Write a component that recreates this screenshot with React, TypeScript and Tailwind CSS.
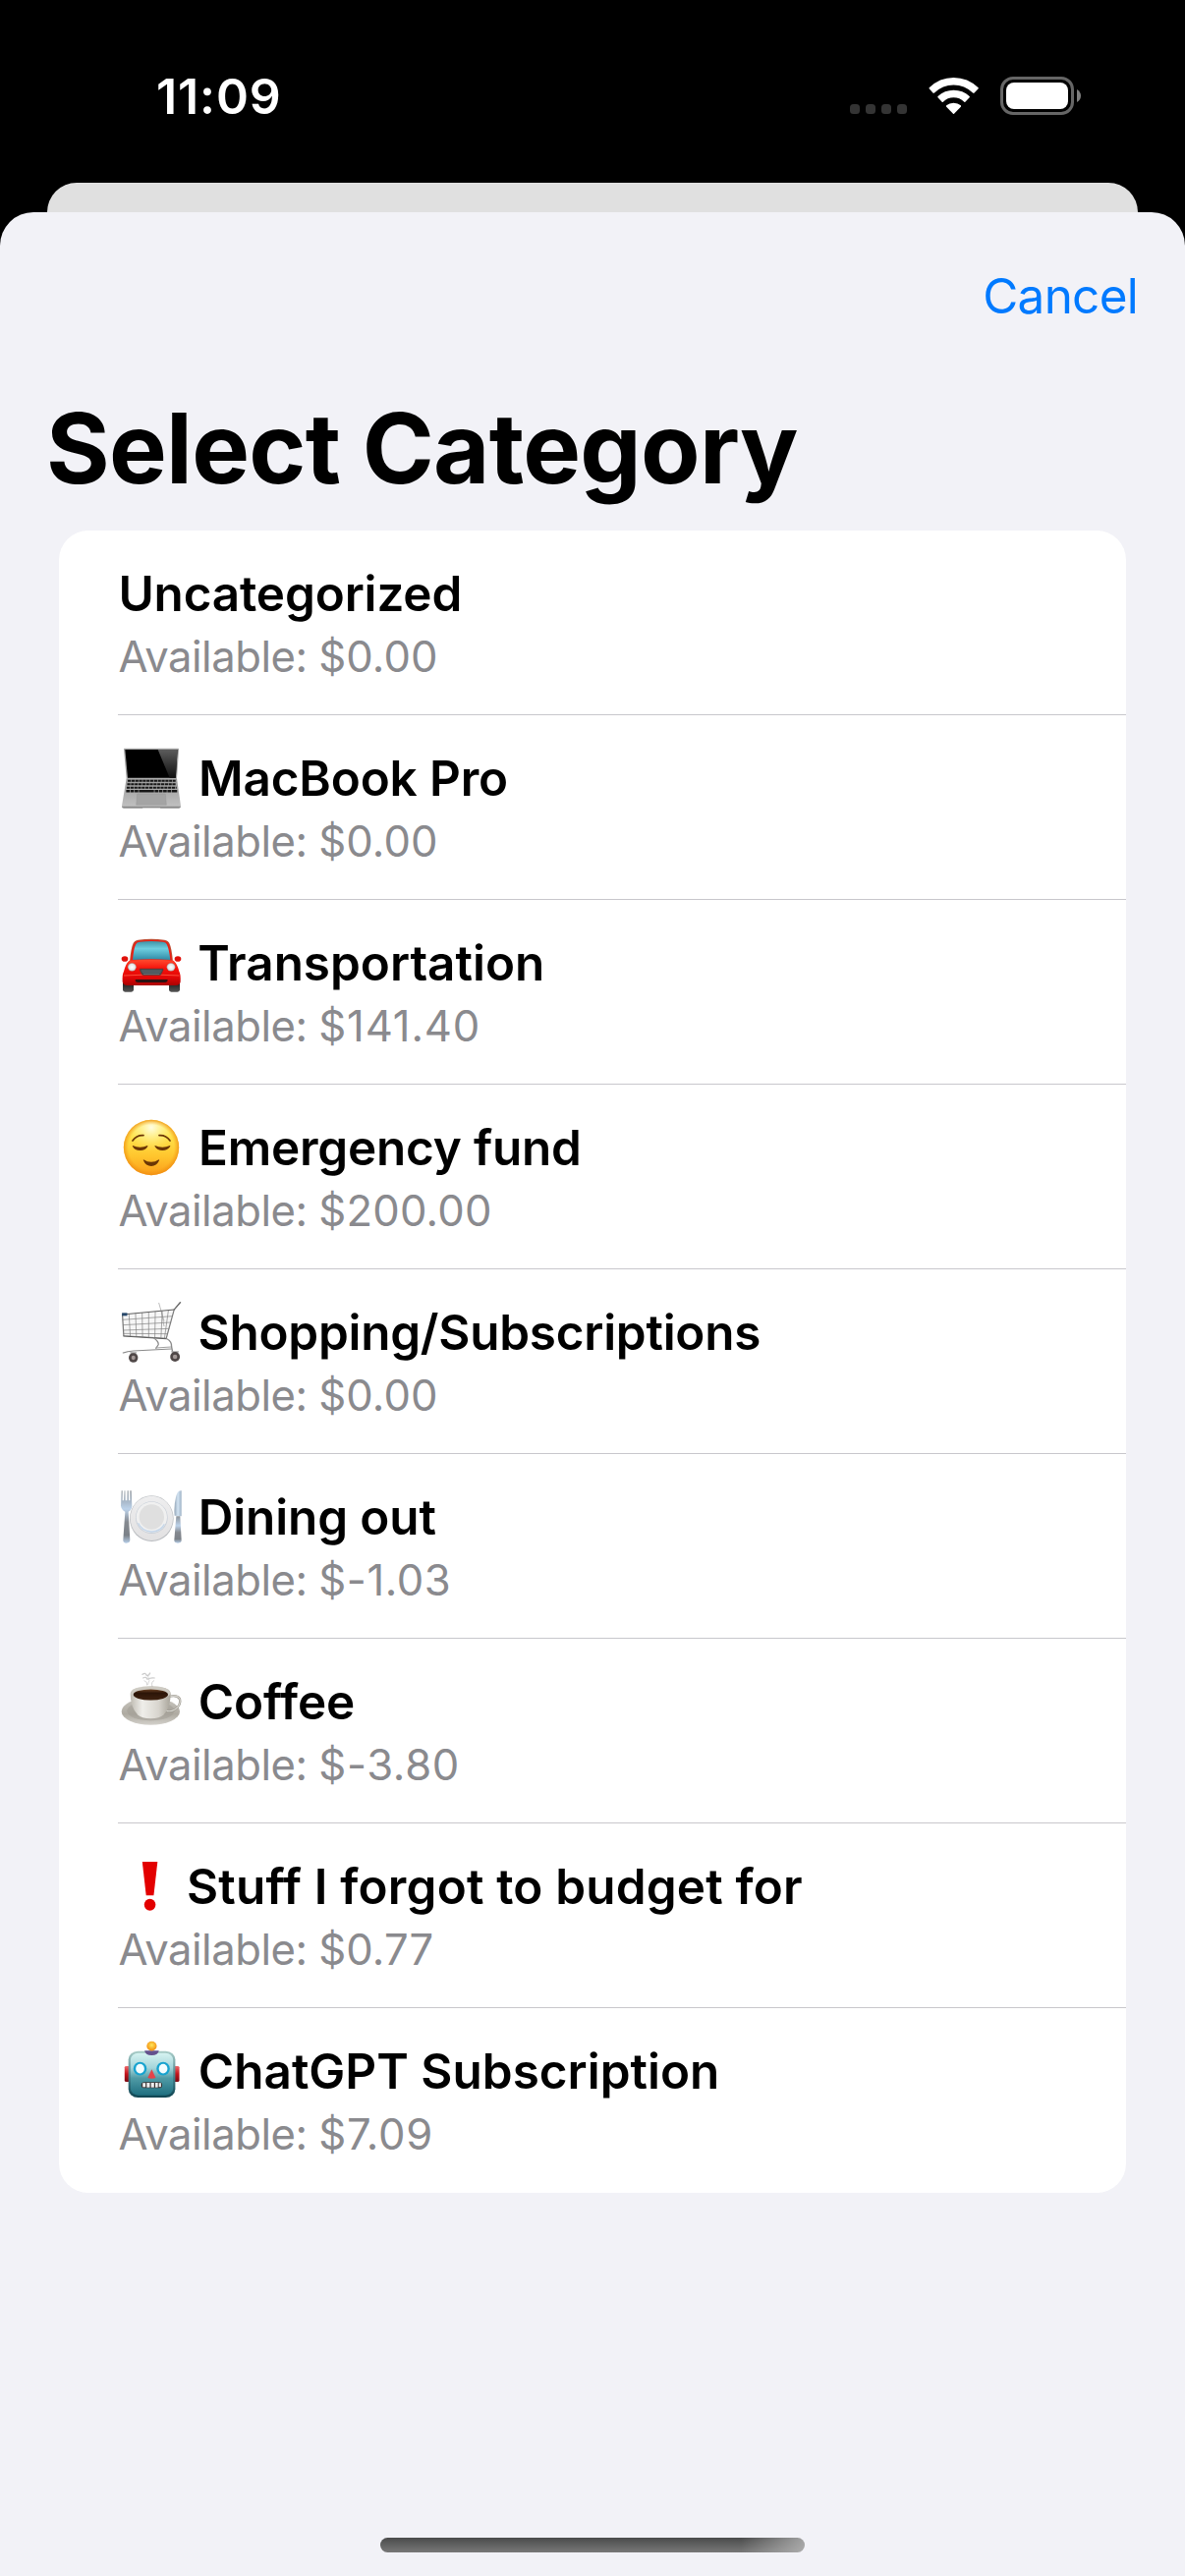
import type { ReactNode } from "react";

function IconBox({ viewBox, children }: { viewBox: string; children: ReactNode }) {
  return (
    <svg className="h-[68px] w-[68px] shrink-0" viewBox={viewBox} preserveAspectRatio="none">
      {children}
    </svg>
  );
}

function Laptop() {
  const keys = [161, 171.5, 182, 192.5];
  return (
    <IconBox viewBox="60 54 204 204">
      <defs>
        <linearGradient id="lapBase" x1="0" y1="0" x2="0" y2="1">
          <stop offset="0" stopColor="#9a9a9a" />
          <stop offset="1" stopColor="#c2c2c2" />
        </linearGradient>
        <linearGradient id="lapGlare" x1="0" y1="0" x2="0" y2="1">
          <stop offset="0" stopColor="#5c5c5c" />
          <stop offset="1" stopColor="#101010" />
        </linearGradient>
      </defs>
      <path d="M80 65 H244 Q246 65 246 68 L240 157 H86 L78 68 Q78 65 80 65 Z" fill="#a3a3a3" />
      <path d="M82 69 H242 L236.500 155 H90 Z" fill="#000" />
      <path d="M182 69 H242 L236.500 155 H218 Z" fill="url(#lapGlare)" />
      <path d="M86 157 H240 L252 241 Q252 245 248 245 H190 L187 248 H138 L135 245 H76 Q72 245 72 241 Z" fill="url(#lapBase)" />
      <path d="M73 242 H251 L252 243 Q251 248 246 248 H190 L187 246 H138 L135 248 H78 Q72 248 72 243 Z" fill="#8a8a8a" />
      {keys.map((y, i) => (
        <path
          key={y}
          d={`M${90 - i * 1.6} ${y + 3.2} H${236 + i * 1.6}`}
          stroke="#161616"
          strokeWidth={i === 3 ? 8 : 6.5}
          strokeDasharray={i === 3 ? "11 2 11 2 11 2 46 2 11 2" : "9.500 2"}
        />
      ))}
      <path d="M119 204 H205 L208 238 H116 Z" fill="#a4a4a4" />
      <path d="M119 204 H205 L208 238 H116 Z" fill="none" stroke="#8f8f8f" strokeWidth="1" />
    </IconBox>
  );
}

function Car() {
  return (
    <IconBox viewBox="60 48 204 204">
      <defs>
        <linearGradient id="carBody" x1="0" y1="0" x2="0" y2="1">
          <stop offset="0" stopColor="#ff4a2e" />
          <stop offset="0.35" stopColor="#f5120b" />
          <stop offset="0.7" stopColor="#e00606" />
          <stop offset="1" stopColor="#a80202" />
        </linearGradient>
        <linearGradient id="carGlass" x1="0" y1="0" x2="0" y2="1">
          <stop offset="0" stopColor="#3f93a6" />
          <stop offset="0.4" stopColor="#6fcfe0" />
          <stop offset="1" stopColor="#2f8aa6" />
        </linearGradient>
        <radialGradient id="carLamp">
          <stop offset="0" stopColor="#ffffff" />
          <stop offset="0.7" stopColor="#e6e6e6" />
          <stop offset="1" stopColor="#a9a9a9" />
        </radialGradient>
        <linearGradient id="tyre" x1="0" y1="0" x2="0" y2="1">
          <stop offset="0" stopColor="#111" />
          <stop offset="1" stopColor="#555" />
        </linearGradient>
      </defs>
      <rect x="75" y="205" width="33" height="34" rx="7" fill="url(#tyre)" />
      <rect x="216" y="205" width="33" height="34" rx="7" fill="url(#tyre)" />
      <path d="M96 146 Q100 104 107 90 Q110 82 122 80 Q162 75 202 80 Q214 82 217 90 Q224 104 228 146 Z" fill="#c0492f" />
      <path d="M99 148 Q103 106 110 92 Q113 85 124 83 Q162 79 200 83 Q211 85 214 92 Q221 106 225 148 Z" fill="#ee1c12" />
      <path d="M105 141 Q108 106 115 93 Q117 87 126 86 Q162 82 198 86 Q207 87 209 93 Q216 106 220 141 Q162 137 105 141 Z" fill="url(#carGlass)" />
      <ellipse cx="81" cy="138" rx="10" ry="8.500" fill="#e0100a" />
      <ellipse cx="243" cy="138" rx="10" ry="8.500" fill="#e0100a" />
      <path d="M94 143 Q162 138 230 143 Q242 154 247 176 Q252 184 251 208 Q250 219 236 219 H89 Q75 219 74 208 Q73 184 78 176 Q83 154 94 143 Z" fill="url(#carBody)" />
      <path d="M78 189 Q162 182 247 189" fill="none" stroke="#ff5a45" strokeWidth="2.500" />
      <ellipse cx="103" cy="163" rx="13" ry="12.500" fill="url(#carLamp)" />
      <ellipse cx="222" cy="163" rx="13" ry="12.500" fill="url(#carLamp)" />
      <path d="M128 168 H197 Q200 168 198 173 L192 185 Q190 188 186 188 H139 Q135 188 133 185 L127 173 Q125 168 128 168 Z" fill="#40474b" stroke="#8b2a22" strokeWidth="1.500" />
      <path d="M131 174 H194 M134 179.500 H191 M138 184.500 H187" stroke="#75828a" strokeWidth="2" />
      <path d="M116 201 H209 Q213 201 212 205 Q210 210 204 210 H121 Q114 210 113 205 Q112 201 116 201 Z" fill="#2c1212" />
    </IconBox>
  );
}

function RelievedFace() {
  return (
    <IconBox viewBox="60 42 204 204">
      <defs>
        <linearGradient id="faceFill" x1="0" y1="0" x2="0" y2="1">
          <stop offset="0" stopColor="#fff27a" />
          <stop offset="0.3" stopColor="#ffe14a" />
          <stop offset="0.65" stopColor="#ffc62e" />
          <stop offset="1" stopColor="#fb9d1a" />
        </linearGradient>
        <radialGradient id="faceEdge">
          <stop offset="0.82" stopColor="#f59a13" stopOpacity="0" />
          <stop offset="1" stopColor="#ee8b10" stopOpacity="0.75" />
        </radialGradient>
        <radialGradient id="faceShine" cx="0.5" cy="0.12" r="0.45">
          <stop offset="0" stopColor="#fffff0" stopOpacity="0.9" />
          <stop offset="1" stopColor="#fff27a" stopOpacity="0" />
        </radialGradient>
      </defs>
      <circle cx="162" cy="144" r="84.500" fill="url(#faceFill)" />
      <circle cx="162" cy="144" r="80" fill="url(#faceShine)" />
      <circle cx="162" cy="144" r="84.500" fill="url(#faceEdge)" />
      <g fill="none" stroke="#6b3605" strokeLinecap="round">
        <path d="M105 123 Q118 105 138 107" strokeWidth="5" />
        <path d="M219 123 Q206 105 186 107" strokeWidth="5" />
      </g>
      <g fill="#6b3605">
        <path d="M105 138 Q128 149 150 138 Q152 139 151 141 Q144 153 128 153 Q111 153 105 141 Q104 138 105 138 Z" />
        <path d="M173 138 Q196 149 219 138 Q221 139 219 142 Q212 153 196 153 Q180 153 173 141 Q172 139 173 138 Z" />
        <path d="M138 181 Q162 196 185 181 Q187 182 186 184 Q178 201 162 201 Q145 201 138 184 Q137 181 138 181 Z" />
      </g>
    </IconBox>
  );
}

function Cart() {
  return (
    <IconBox viewBox="44.8 66 152.3 204">
      <path d="M55 116 L173 100 L156 187 L58 179 Z" fill="#eeeeee" opacity="0.55" />
      <g fill="none" stroke="#7d7d7d" strokeWidth="1.700">
        <path d="M55 130 L170 119 M56 146 L166 138 M57 162 L162 157 M57 172 L159 173" />
        <path d="M70 112 L73 180 M85 110 L87 181 M100 108 L101 182 M115 107 L115 183 M130 105 L129 184 M146 103 L143 185 M160 101 L151 186" />
      </g>
      <path d="M138 78 L150 134 M144 104 L150 150" fill="none" stroke="#8d8d8d" strokeWidth="1.500" />
      <path d="M55 114 L173 99" stroke="#5f5f5f" strokeWidth="3.500" />
      <path d="M55 114 L58 179 L155 187 L173 99" fill="none" stroke="#7c7c7c" strokeWidth="2.800" />
      <path d="M57 180 L156 188" stroke="#5c5c5c" strokeWidth="3" />
      <path d="M187 77 L173 99" stroke="#6a6a6a" strokeWidth="3.500" strokeLinecap="round" />
      <rect x="54" y="109" width="12" height="9" fill="#28486b" />
      <path d="M126 185 Q138 196 137 206 L131 218" fill="none" stroke="#8a8a8a" strokeWidth="3" />
      <path d="M156 188 Q168 196 167 212 L170 232" fill="none" stroke="#8a8a8a" strokeWidth="3" />
      <path d="M57 231 Q66 226 80 225 L166 219" fill="none" stroke="#8b8b8b" strokeWidth="3.500" strokeLinecap="round" />
      <path d="M131 216 L166 213" stroke="#a0a0a0" strokeWidth="2.500" />
      <path d="M72 229 H88 L84 240 H76 Z M166 226 H184 L180 238 H170 Z" fill="#a5a5a5" />
      <ellipse cx="80" cy="246" rx="10.500" ry="14.500" fill="#4f4747" />
      <ellipse cx="80" cy="246" rx="4.500" ry="6.500" fill="#a39997" />
      <ellipse cx="175" cy="243" rx="11" ry="15" fill="#4f4747" />
      <ellipse cx="175" cy="243" rx="5" ry="7" fill="#a39997" />
    </IconBox>
  );
}

function Plate() {
  return (
    <IconBox viewBox="60 60 204 204">
      <defs>
        <linearGradient id="steel" x1="0" y1="0" x2="0" y2="1">
          <stop offset="0" stopColor="#8d949b" />
          <stop offset="0.35" stopColor="#bcd2ea" />
          <stop offset="0.6" stopColor="#85898f" />
          <stop offset="0.85" stopColor="#7b8188" />
          <stop offset="1" stopColor="#b7cee8" />
        </linearGradient>
        <linearGradient id="blade" x1="0" y1="0" x2="1" y2="0">
          <stop offset="0" stopColor="#93a5b6" />
          <stop offset="0.5" stopColor="#d3e4f3" />
          <stop offset="1" stopColor="#9eb2c6" />
        </linearGradient>
        <linearGradient id="plateRim" x1="0" y1="0" x2="0" y2="1">
          <stop offset="0" stopColor="#eeeeef" />
          <stop offset="1" stopColor="#e2e1e2" />
        </linearGradient>
      </defs>
      <ellipse cx="163" cy="167" rx="67" ry="70" fill="#b9bcc0" />
      <ellipse cx="163" cy="166" rx="65" ry="68" fill="url(#plateRim)" />
      <circle cx="163" cy="164" r="49" fill="#c8cfd8" />
      <circle cx="163" cy="163" r="47" fill="#f0f0f0" />
      <circle cx="163" cy="162" r="38" fill="#dfdfdf" />
      <path d="M122 181 A45 45 0 0 0 202 184" fill="none" stroke="#c4d6ea" strokeWidth="4" />
      <path d="M71 82 H74 V112 H78 L80 82 H82 L83 112 H88 L89 82 H92 L93 112 H97 V82 H101 L103 128 Q102 140 92 146 L97 232 Q97 242 86 242 Q75 242 76 232 L82 146 Q71 140 69 128 Z" fill="url(#steel)" />
      <path d="M254 82 V160 L233 158 Q230 120 240 92 Q245 81 254 82 Z" fill="url(#blade)" />
      <path d="M238 160 H250 L254 232 Q255 242 243 242 Q231 242 232 232 Z" fill="url(#steel)" />
    </IconBox>
  );
}

function CoffeeCup() {
  return (
    <IconBox viewBox="60 54 204 204">
      <defs>
        <linearGradient id="saucer" x1="0" y1="0" x2="0" y2="1">
          <stop offset="0" stopColor="#c9c6bf" />
          <stop offset="0.6" stopColor="#aeaaa1" />
          <stop offset="1" stopColor="#d3d1cb" />
        </linearGradient>
        <linearGradient id="cup" x1="0" y1="0" x2="1" y2="0">
          <stop offset="0" stopColor="#bfbbb2" />
          <stop offset="0.3" stopColor="#efeeea" />
          <stop offset="0.7" stopColor="#d8d5ce" />
          <stop offset="1" stopColor="#a8a49a" />
        </linearGradient>
        <linearGradient id="brew" x1="0" y1="0" x2="0" y2="1">
          <stop offset="0" stopColor="#6b4326" />
          <stop offset="0.35" stopColor="#2c1508" />
          <stop offset="1" stopColor="#3e2210" />
        </linearGradient>
      </defs>
      <ellipse cx="160" cy="186" rx="89" ry="41" fill="url(#saucer)" />
      <ellipse cx="160" cy="184" rx="72" ry="30" fill="#a09c93" opacity="0.5" />
      <path d="M210 143 Q240 132 249 148 Q254 166 234 180 Q220 188 208 184" fill="none" stroke="#99968d" strokeWidth="7" />
      <path d="M210 143 Q240 132 249 148 Q254 166 234 180 Q220 188 208 184" fill="none" stroke="#d8d6d0" strokeWidth="3.500" />
      <path d="M98 132 Q100 110 160 109 Q220 110 221 132 Q221 172 200 196 Q188 208 160 208 Q132 208 120 196 Q98 172 98 132 Z" fill="url(#cup)" />
      <ellipse cx="160" cy="130" rx="60" ry="21.500" fill="#cecbc3" />
      <ellipse cx="160" cy="135" rx="53" ry="16.500" fill="url(#brew)" />
      <g fill="none" stroke="#a8a8a8" strokeLinecap="round" opacity="0.6">
        <path d="M135 73 Q144 66 147 75 Q152 80 158 69" strokeWidth="4" />
        <path d="M137 84 Q146 78 150 88 Q160 82 172 84" strokeWidth="3.500" />
        <path d="M141 92 Q152 96 149 105 M170 92 Q160 96 165 110" strokeWidth="2.500" />
        <path d="M152 78 Q160 92 152 104" strokeWidth="2" />
      </g>
    </IconBox>
  );
}

function Exclamation() {
  return (
    <IconBox viewBox="41.3 48 140.3 204">
      <path d="M92.500 75 H124.500 L116.500 178 H100.500 Z" fill="#e30000" />
      <ellipse cx="108.500" cy="206" rx="12" ry="18" fill="#e30000" />
    </IconBox>
  );
}

function Robot() {
  return (
    <IconBox viewBox="165 72 140.3 204">
      <defs>
        <linearGradient id="robotHead" x1="0" y1="0" x2="0" y2="1">
          <stop offset="0" stopColor="#d6f3f1" />
          <stop offset="0.35" stopColor="#a5d5da" />
          <stop offset="0.6" stopColor="#4f9aa5" />
          <stop offset="1" stopColor="#1f6f80" />
        </linearGradient>
        <linearGradient id="robotEdge" x1="0" y1="0" x2="0" y2="1">
          <stop offset="0" stopColor="#aacdc8" />
          <stop offset="0.6" stopColor="#3d7984" />
          <stop offset="1" stopColor="#0f4552" />
        </linearGradient>
        <linearGradient id="robotEar" x1="0" y1="0" x2="0" y2="1">
          <stop offset="0" stopColor="#f0686a" />
          <stop offset="0.5" stopColor="#c3141c" />
          <stop offset="1" stopColor="#7d0810" />
        </linearGradient>
        <radialGradient id="robotBulb" cx="0.5" cy="0.4" r="0.6">
          <stop offset="0" stopColor="#ffe75a" />
          <stop offset="1" stopColor="#f28a0c" />
        </radialGradient>
      </defs>
      <rect x="179" y="159" width="14" height="48" rx="4" fill="url(#robotEar)" />
      <rect x="280" y="159" width="14" height="48" rx="4" fill="url(#robotEar)" />
      <rect x="187" y="113" width="98.500" height="142" rx="20" ry="26" fill="url(#robotEdge)" />
      <rect x="191.500" y="119" width="89.500" height="129" rx="16" ry="21" fill="url(#robotHead)" />
      <path d="M221 112 H251 Q250 126 236 126 Q222 126 221 112 Z" fill="#64518d" />
      <ellipse cx="236" cy="98" rx="10.500" ry="14.500" fill="url(#robotBulb)" />
      <ellipse cx="211.500" cy="167" rx="14" ry="20.500" fill="#18a3cf" />
      <ellipse cx="211.500" cy="167" rx="9" ry="14.500" fill="#f3fdff" />
      <ellipse cx="260" cy="167" rx="14" ry="20.500" fill="#18a3cf" />
      <ellipse cx="260" cy="167" rx="9" ry="14.500" fill="#f3fdff" />
      <path d="M236 169 L244.500 195 Q236 200 227.500 195 Z" fill="#e4434a" />
      <rect x="214" y="208" width="44" height="18" rx="7" ry="8" fill="#3a3434" />
      <g fill="#efefef">
        <rect x="217" y="210.500" width="6" height="12.500" />
        <rect x="225.500" y="210" width="6.500" height="14" />
        <rect x="234.500" y="210" width="6.500" height="14" />
        <rect x="243.500" y="210" width="5.500" height="14" />
        <rect x="251" y="210.500" width="4.500" height="12" />
      </g>
    </IconBox>
  );
}

type Category = {
  name: string;
  nameClass: string;
  available: string;
  amountClass: string;
  icon?: ReactNode;
};

const categories: Category[] = [
  { name: "Uncategorized", nameClass: "ml-[0.4px] tracking-[-0.13px]", available: "$0.00", amountClass: "tracking-[0.1px]" },
  { name: "MacBook Pro", nameClass: "ml-[14px] tracking-[-0.13px]", available: "$0.00", amountClass: "tracking-[0.1px]", icon: <Laptop /> },
  { name: "Transportation", nameClass: "ml-[13.3px] tracking-[0.01px]", available: "$141.40", amountClass: "tracking-[0.85px]", icon: <Car /> },
  { name: "Emergency fund", nameClass: "ml-[14px] tracking-[-0.19px]", available: "$200.00", amountClass: "tracking-[0.22px]", icon: <RelievedFace /> },
  { name: "Shopping/Subscriptions", nameClass: "ml-[13.6px] tracking-[-0.23px]", available: "$0.00", amountClass: "tracking-[0.1px]", icon: <Cart /> },
  { name: "Dining out", nameClass: "ml-[13.7px] tracking-[-0.1px]", available: "$-1.03", amountClass: "tracking-[0.55px]", icon: <Plate /> },
  { name: "Coffee", nameClass: "ml-[13.7px] tracking-[-0.11px]", available: "$-3.80", amountClass: "tracking-[0.7px]", icon: <CoffeeCup /> },
  { name: "Stuff I forgot to budget for", nameClass: "ml-[2px] tracking-[0.2px]", available: "$0.77", amountClass: "tracking-[0.1px]", icon: <Exclamation /> },
  { name: "ChatGPT Subscription", nameClass: "ml-[13.8px] tracking-[0.03px]", available: "$7.09", amountClass: "tracking-[0.7px]", icon: <Robot /> },
];

function StatusBar() {
  return (
    <div className="flex h-[186px] items-start justify-between pr-[106px] pl-[159px]">
      <div className="mt-[68px] text-[50px] leading-[60px] font-semibold tracking-[0.9px] text-white">11:09</div>
      <div className="mt-[78px] flex h-[39px] items-start">
        <div className="mt-[28px] flex gap-[6px]">
          <div className="size-[10px] rounded-[3.5px] bg-[#343434]" />
          <div className="size-[10px] rounded-[3.5px] bg-[#343434]" />
          <div className="size-[10px] rounded-[3.5px] bg-[#343434]" />
          <div className="size-[10px] rounded-[3.5px] bg-[#343434]" />
        </div>
        <svg className="ml-[22px] h-[39px] w-[51px]" viewBox="435 114 153 117" fill="#fff">
          <path d="M437 148 Q468 117 511.500 117 Q555 117 587 148 Q588 149.500 587 151 L574 164 Q572.500 165 571 164 Q545 139.500 511.500 139.500 Q478 139.500 452 164 Q450.500 165 449 164 L437 151 Q436 149.500 437 148 Z" />
          <path d="M463.500 174 Q484 155 511.500 155 Q540 155 560 174 Q561.500 176 560 178 L547 191 Q545.500 192.500 544 191 Q530 178 511.500 178 Q493 178 479.500 191 Q478 192.500 476 191 L463.500 178 Q462 176 463.500 174 Z" />
          <path d="M489.500 202 Q498 194 511.500 194 Q525 194 533.500 202 Q535 204 533.500 206 L513 227 Q511.500 228.500 510 227 L489.500 206 Q488 204 489.500 202 Z" />
        </svg>
        <div className="ml-[22px] flex items-center">
          <div className="h-[39px] w-[75px] rounded-[13px] border-3 border-[#666666] p-[3px]">
            <div className="h-full w-full rounded-[8px] bg-white" />
          </div>
          <svg className="ml-[3px] h-[13px] w-[4px]" viewBox="0 0 4 13" fill="#7f7f7f">
            <path d="M0 0 Q4 2.500 4 6.500 Q4 10.500 0 13 Z" />
          </svg>
        </div>
      </div>
    </div>
  );
}

function CategoryRow({ item, last }: { item: Category; last: boolean }) {
  return (
    <li className="flex h-[188px] pl-[60px]">
      <div className={last ? "flex-1 pt-[30px]" : "flex-1 border-b border-[#c8c7cc] pt-[30px]"}>
        <div className="flex h-[68px] items-center">
          {item.icon}
          <span className={`text-[49.4px] leading-[68px] font-semibold whitespace-nowrap text-black ${item.nameClass}`}>
            {item.name}
          </span>
        </div>
        <div className="mt-px ml-[0.6px] text-[43.6px] leading-[60px] tracking-[-0.48px] text-[#8a8a8e]">
          Available: <span className={item.amountClass}>{item.available}</span>
        </div>
      </div>
    </li>
  );
}

export default function App() {
  return (
    <div className="flex h-[2622px] w-[1206px] flex-col overflow-hidden bg-black font-[Inter,sans-serif]">
      <StatusBar />
      <div className="mx-[48px] h-[30px] rounded-t-[30px] bg-[#e0e0e0]" />
      <div className="flex flex-1 flex-col rounded-t-[34px] bg-[#f2f2f7]">
        <div className="flex justify-end pt-[55px] pr-[48px]">
          <button className="text-[49.4px] leading-[60px] tracking-[-0.7px] text-[#007aff]">Cancel</button>
        </div>
        <h1 className="mt-[65px] ml-[47px] text-[98.8px] leading-[120px] font-bold tracking-[-0.73px] text-black">
          Select Category
        </h1>
        <ul className="mx-[60px] mt-[24px] rounded-[30px] bg-white">
          {categories.map((item, i) => (
            <CategoryRow key={item.name} item={item} last={i === categories.length - 1} />
          ))}
        </ul>
        <div className="mt-auto mb-[24px] ml-[387px] h-[15px] w-[432px] rounded-full bg-[linear-gradient(to_right,transparent_85%,rgba(190,190,190,0.75)_100%),linear-gradient(to_bottom,#4a4b4b,#787878)]" />
      </div>
    </div>
  );
}
